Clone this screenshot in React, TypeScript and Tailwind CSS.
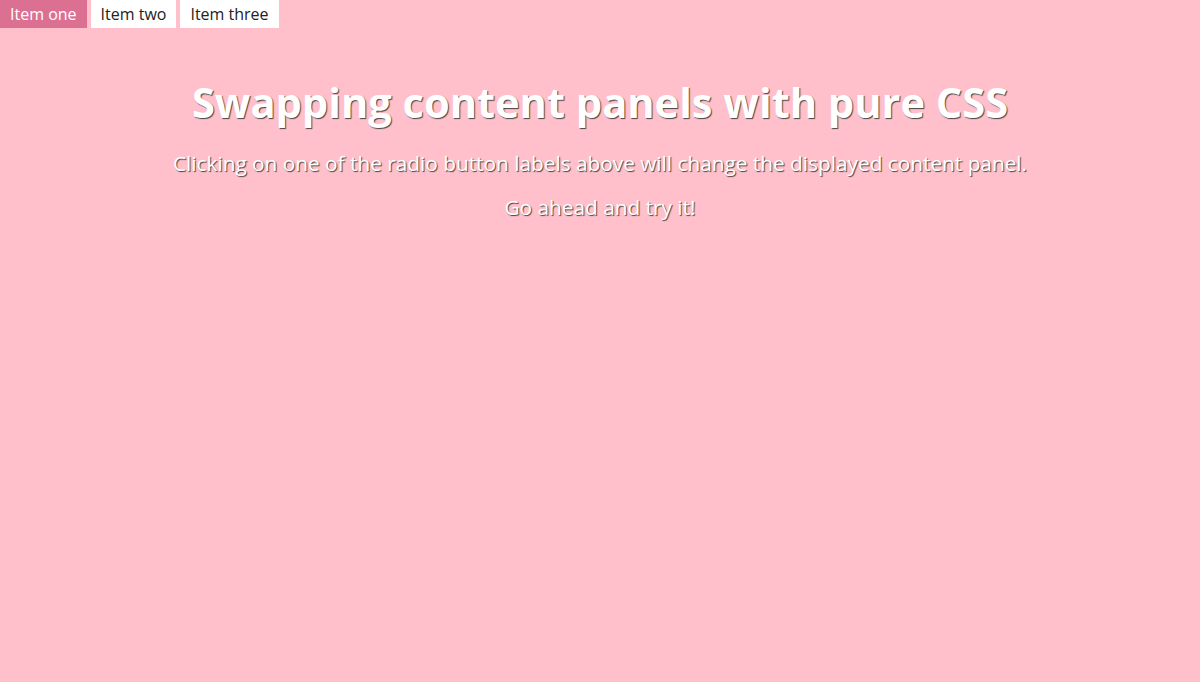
import { useState } from 'react';

const tabs = ['Item one', 'Item two', 'Item three'];

export default function App() {
  const [active, setActive] = useState(0);

  return (
    <div className="min-h-screen bg-[#ffc0cb] font-['Open_Sans',sans-serif]">
      {/* Tabs */}
      <div className="flex gap-1">
        {tabs.map((t, i) => (
          <button
            key={t}
            onClick={() => setActive(i)}
            className={`h-7 px-2.5 text-base leading-7 ${
              i === active ? 'bg-[#db7093] text-white' : 'bg-white text-[#222]'
            }`}
          >
            {t}
          </button>
        ))}
      </div>

      {/* Panel */}
      <div className="text-center text-white [text-shadow:1px_1px_1px_#444]">
        <h1 className="mt-[46px] text-[41.6px] font-bold leading-[56px]">Swapping content panels with pure CSS</h1>
        <p className="mt-[21px] text-[20.8px] leading-[25px]">
          Clicking on one of the radio button labels above will change the displayed content panel.
        </p>
        <p className="mt-[19px] text-[20.8px] leading-[25px]">Go ahead and try it!</p>
      </div>
    </div>
  );
}
